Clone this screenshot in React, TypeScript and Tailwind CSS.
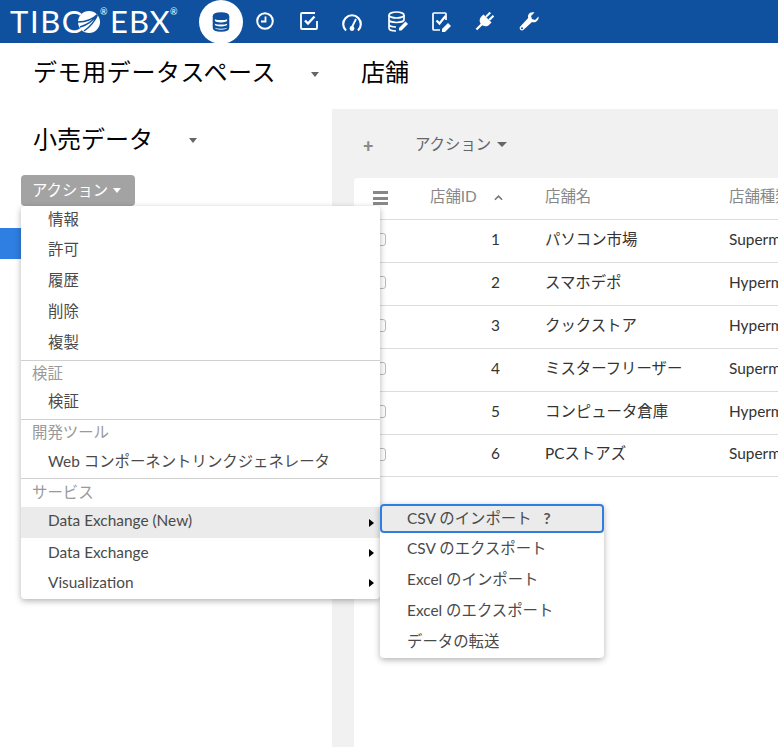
import React from "react";

function Caret({ className }: { className: string }) {
  return <span className={"inline-block w-0 h-0 border-l-[4px] border-r-[4px] border-t-[5px] border-l-transparent border-r-transparent " + className} />;
}

function Arrow() {
  return <span className="absolute right-[6px] top-1/2 -translate-y-1/2 w-0 h-0 border-t-[4px] border-b-[4px] border-l-[5px] border-t-transparent border-b-transparent border-l-black" />;
}

const Db = ({ c }: { c: string }) => (
  <svg viewBox="0 0 20 22" className="w-[18px] h-[20px]" fill="none" stroke={c} strokeWidth="2.4">
    <ellipse cx="10" cy="4.5" rx="8" ry="3.2" fill={c} />
    <path d="M2 4.5v13c0 1.800 3.600 3.200 8 3.200s8-1.400 8-3.200v-13" />
    <path d="M2 9.500c0 1.800 3.600 3.200 8 3.200s8-1.400 8-3.200M2 14c0 1.800 3.600 3.200 8 3.200s8-1.400 8-3.200" />
  </svg>
);

function NavIcons() {
  return (
    <div className="flex items-center h-[43px]">
      <div className="w-[44px] h-[44px] rounded-full bg-white flex items-center justify-center shrink-0 mt-[1px]">
        <Db c="#0f519f" />
      </div>
      <svg viewBox="0 0 18 18" className="w-[18px] h-[18px] ml-[13px] -mt-[1px]" fill="none" stroke="#fff" strokeWidth="2">
        <circle cx="9" cy="9" r="7.800" />
        <path d="M9.500 4.500v5H5" strokeWidth="1.800" />
      </svg>
      <svg viewBox="0 0 18 18" className="w-[18px] h-[18px] ml-[26px] -mt-[1px]" fill="none" stroke="#fff" strokeWidth="1.800">
        <path d="M17 9v7a1 1 0 0 1-1 1H2a1 1 0 0 1-1-1V2a1 1 0 0 1 1-1h13" />
        <path d="M5 8.500l3 3 6.500-7" strokeWidth="2.400" />
      </svg>
      <svg viewBox="0 0 20 19" className="w-[20px] h-[19px] ml-[24px] mt-[1px]" fill="none" stroke="#fff" strokeWidth="2.200">
        <path d="M4 17.500A8.800 8.800 0 1 1 16 17.500" />
        <path d="M14 6l-4 8" strokeWidth="1.800" />
        <circle cx="10" cy="15.500" r="2.400" fill="#fff" stroke="none" />
      </svg>
      <svg viewBox="0 0 20 21" className="w-[20px] h-[21px] ml-[26px]" fill="none" stroke="#fff" strokeWidth="1.700">
        <ellipse cx="8.500" cy="4" rx="7.500" ry="3" />
        <path d="M1 4v13c0 1.700 3 3 7 3M16 4v5M1 8.500c0 1.700 3.300 3 7.500 3s7.500-1.300 7.500-3M1 13c0 1.700 3 3 7 3" />
        <path d="M11 17l6.500-6.500 2.500 2.500-6.500 6.500H11z" fill="#fff" stroke="none" />
      </svg>
      <svg viewBox="0 0 19 20" className="w-[19px] h-[20px] ml-[24px]" fill="none" stroke="#fff" strokeWidth="1.700">
        <path d="M14 8V2a1 1 0 0 0-1-1H2a1 1 0 0 0-1 1v15a1 1 0 0 0 1 1h6" />
        <path d="M4.500 8.500l3 3 6-7.500" strokeWidth="2.200" />
        <path d="M10 17l6-6 3 3-6 6h-3z" fill="#fff" stroke="none" />
      </svg>
      <svg viewBox="0 0 20 20" className="w-[19px] h-[19px] ml-[24px]" fill="#fff">
        <g transform="rotate(45 10 10)">
          <rect x="6.500" y="-1" width="2.200" height="6.500" />
          <rect x="11.300" y="-1" width="2.200" height="6.500" />
          <path d="M4 5.500h12v3.500c0 3-2.300 5-4.800 5.500V22H8.800v-7.500C6.300 14 4 12 4 9z" />
        </g>
      </svg>
      <svg viewBox="0 0 20 20" className="w-[20px] h-[20px] ml-[25px]" fill="#fff">
        <path d="M19.500 4.500L16 8l-3-1-1-3 3.500-3.500c-2.500-.8-5 0-6 2-.7 1.300-.6 2.500-.3 3.500L1.300 14.500c-.9.900-.9 2.300 0 3.200s2.400.9 3.300 0L13 10c1.200.5 2.700.4 4-.3 2-1.100 3-3 2.500-5.200z" />
        <circle cx="3" cy="16.200" r="1" fill="#0f519f" />
      </svg>
    </div>
  );
}

function Item({ children, active, arrow, h = "h-[31px]" }: { children: React.ReactNode; active?: boolean; arrow?: boolean; h?: string }) {
  return (
    <div className={"relative pl-[27px] flex items-center text-[15.4px] text-[#4a4a4a] " + h + " " + (active ? "bg-[#ebebeb]" : "")}>
      {children}
      {arrow && <Arrow />}
    </div>
  );
}

function Group({ children, h = "h-[26px] pt-[1px]" }: { children: React.ReactNode; h?: string }) {
  return (
    <div className={"border-t border-[#d0d0d0] pl-[11px] flex items-center text-[15.4px] text-[#999] " + h}>{children}</div>
  );
}

function SubItem({ children }: { children: React.ReactNode }) {
  return <div className="h-[31px] pl-[27px] flex items-center text-[15.4px] text-[#4a4a4a]">{children}</div>;
}

const rows: [string, string, string][] = [
  ["1", "パソコン市場", "Supermarket"],
  ["2", "スマホデポ", "Hypermarket"],
  ["3", "クックストア", "Hypermarket"],
  ["4", "ミスターフリーザー", "Supermarket"],
  ["5", "コンピュータ倉庫", "Hypermarket"],
  ["6", "PCストアズ", "Supermarket"],
];

export default function App() {
  return (
    <div
      className="relative w-[778px] h-[747px] overflow-hidden bg-white"
      style={{ fontFamily: '"Lato", "Noto Sans CJK JP", sans-serif' }}
    >
      <header className="h-[43px] bg-[#0f519f] flex items-center">
        <div className="flex items-center pl-[10px] text-white font-normal leading-none shrink-0 w-[199px]">
          <span className="text-[31px] tracking-[1.600px] w-[68px] whitespace-nowrap">TIBC</span>
          <span className="w-[22px] h-[22px] rounded-full bg-white shrink-0 flex items-center justify-center overflow-hidden">
            <svg viewBox="0 0 22 22" className="w-[22px] h-[22px]" fill="none" stroke="#0f519f" strokeWidth="1.400">
              <path d="M0 11C8 11 15 8 20 3M2 16C9 14 15 10 20 3M6 20C12 16 17 10 20 3" />
            </svg>
          </span>
          <span className="text-[9px] self-start mt-[1px] w-[10px]">®</span>
          <span className="text-[31px] tracking-[1px] w-[60px] whitespace-nowrap">EBX</span>
          <span className="text-[9px] self-start mt-[1px]">®</span>
        </div>
        <NavIcons />
      </header>

      <div className="h-[66px] pb-[8px] flex items-center text-[24px] text-black">
        <div className="w-[361px] pl-[33px] flex items-center shrink-0">
          <span className="tracking-[0.6px]">デモ用データスペース</span>
          <Caret className="border-t-[#666] ml-[35px] mt-[4px]" />
        </div>
        <span>店舗</span>
      </div>

      <div className="flex h-[638px]">
        <aside className="w-[332px] shrink-0">
          <div className="pl-[33px] pt-[11px] flex items-center text-[24px] text-black h-[49px]">
            <span>小売データ</span>
            <Caret className="border-t-[#666] ml-[36px] mt-[2px]" />
          </div>
          <div className="ml-[21px] mt-[17px] w-[114px] h-[31px] pl-[11px] rounded-[4px] bg-[#a3a3a3] text-white text-[15.4px] flex items-center gap-[5px]">
            <span>アクション</span>
            <Caret className="border-t-white" />
          </div>
          <div className="mt-[22px] w-[21px] h-[31px] bg-[#2f7fe3]" />
        </aside>

        <main className="flex-1 min-w-0 bg-[#f1f1f1] pl-[22px]">
          <div className="h-[69px] pt-[2px] flex items-center text-[#666] text-[15.4px]">
            <span className="text-[18px] font-black text-[#8a8a8a] w-[61px] pl-[9px] mt-[3px]">+</span>
            <span>アクション</span>
            <span className="inline-block w-0 h-0 ml-[6px] border-l-[5px] border-r-[5px] border-t-[5px] border-l-transparent border-r-transparent border-t-[#666]" />
          </div>
          <div className="bg-white h-[569px] rounded-tl-[4px] text-[15.4px] text-[#333]">
            <div className="h-[42px] pb-[3px] flex items-center border-b border-[#ddd] text-[#888]">
              <div className="w-[54px] pl-[19px] flex flex-col gap-[2.500px] shrink-0 mt-[2px]">
                <span className="block w-[15px] h-[3px] bg-[#888]" />
                <span className="block w-[15px] h-[3px] bg-[#888]" />
                <span className="block w-[15px] h-[3px] bg-[#888]" />
              </div>
              <div className="w-[137px] pl-[22px] flex items-center shrink-0">
                <span>店舗ID</span>
                <svg viewBox="0 0 10 6" className="w-[9px] h-[6px] ml-[17px] mt-[3px]" fill="none" stroke="#777" strokeWidth="1.800"><path d="M1 5l4-4 4 4" /></svg>
              </div>
              <div className="w-[184px] shrink-0">店舗名</div>
              <div className="whitespace-nowrap">店舗種類</div>
            </div>
            {rows.map((r, i) => (
              <div key={r[0]} className={"flex items-center border-b border-[#ddd] pb-[3px] " + (i === 5 ? "h-[42px]" : "h-[43px]")}>
                <div className="w-[54px] pl-[19px] shrink-0">
                  <span className="block w-[13px] h-[13px] rounded-[3px] border border-[#bbb]" />
                </div>
                <div className="w-[92px] text-right shrink-0">{r[0]}</div>
                <div className="w-[45px] shrink-0" />
                <div className="w-[184px] shrink-0">{r[1]}</div>
                <div className="whitespace-nowrap">{r[2]}</div>
              </div>
            ))}
          </div>
        </main>
      </div>

      {/* action menu */}
      <div className="absolute left-[21px] top-[206px] w-[359px] h-[393px] bg-white rounded-[4px] shadow-[0_2px_6px_rgba(0,0,0,0.3)]">
        <Item h="h-[28px] pt-[0px]">情報</Item>
        <Item>許可</Item>
        <Item>履歴</Item>
        <Item>削除</Item>
        <Item h="h-[33px] pb-[2px]">複製</Item>
        <Group>検証</Group>
        <Item h="h-[33px] pb-[2px]">検証</Item>
        <Group>開発ツール</Group>
        <Item h="h-[33px]">Web コンポーネントリンクジェネレータ</Item>
        <Group h="h-[29px]">サービス</Group>
        <Item active arrow h="h-[31px] pb-[3px]">Data Exchange (New)</Item>
        <Item arrow h="h-[30px] pb-[1px]">Data Exchange</Item>
        <Item arrow h="h-[30px]">Visualization</Item>
      </div>

      {/* sub menu */}
      <div className="absolute left-[380px] top-[504px] w-[224px] h-[154px] bg-white rounded-[4px] shadow-[0_2px_6px_rgba(0,0,0,0.3)]">
        <div className="h-[29px] rounded-[4px] border-2 border-[#2f7fe3] bg-[#ebebeb] pl-[25px] flex items-center text-[15.4px] text-[#4a4a4a]">
          CSV のインポート<span className="ml-[12px] font-bold text-[#555]">?</span>
        </div>
        <SubItem>CSV のエクスポート</SubItem>
        <SubItem>Excel のインポート</SubItem>
        <SubItem>Excel のエクスポート</SubItem>
        <SubItem>データの転送</SubItem>
      </div>
    </div>
  );
}
